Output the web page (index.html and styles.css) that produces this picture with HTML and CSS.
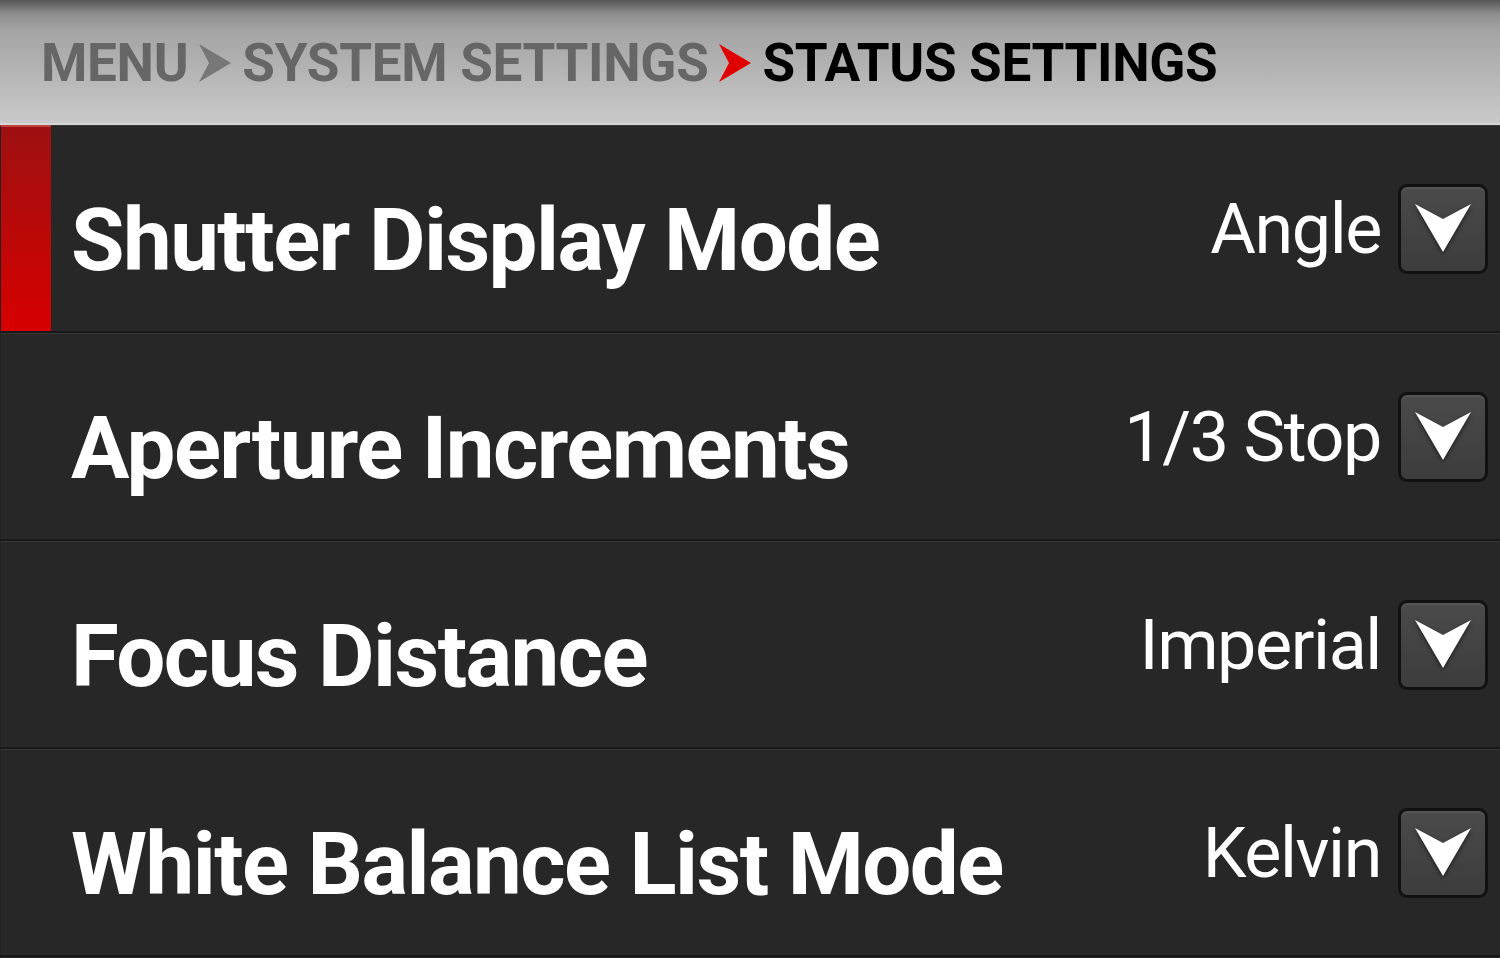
FILE: index.html
```html
<!DOCTYPE html>
<html>
<head>
<meta charset="utf-8">
<link rel="stylesheet" href="styles.css">
</head>
<body>
<header class="crumbs">
  <span class="crumb">MENU</span>
  <svg class="chev" viewBox="0 0 32 38"><path d="M0 0 L32 19 L0 38 L10 19 Z" fill="#777"/></svg>
  <span class="crumb">SYSTEM SETTINGS</span>
  <svg class="chev" viewBox="0 0 32 38"><path d="M0 0 L32 19 L0 38 L10 19 Z" fill="#e00000"/></svg>
  <span class="crumb current">STATUS SETTINGS</span>
</header>
<main class="list">
  <div class="row selected">
    <div class="marker"></div>
    <div class="label">Shutter Display Mode</div>
    <div class="value">Angle</div>
    <div class="drop"><svg viewBox="3 3 84 84"><path d="M17 20 L45 35 L73 20 L45 68 Z" fill="#fff"/></svg></div>
  </div>
  <div class="row">
    <div class="marker"></div>
    <div class="label">Aperture Increments</div>
    <div class="value">1/3 Stop</div>
    <div class="drop"><svg viewBox="3 3 84 84"><path d="M17 20 L45 35 L73 20 L45 68 Z" fill="#fff"/></svg></div>
  </div>
  <div class="row">
    <div class="marker"></div>
    <div class="label">Focus Distance</div>
    <div class="value">Imperial</div>
    <div class="drop"><svg viewBox="3 3 84 84"><path d="M17 20 L45 35 L73 20 L45 68 Z" fill="#fff"/></svg></div>
  </div>
  <div class="row">
    <div class="marker"></div>
    <div class="label">White Balance List Mode</div>
    <div class="value">Kelvin</div>
    <div class="drop"><svg viewBox="3 3 84 84"><path d="M17 20 L45 35 L73 20 L45 68 Z" fill="#fff"/></svg></div>
  </div>
</main>
</body>
</html>
```
FILE: styles.css
```css
* { box-sizing: border-box; }
html, body {
  margin: 0;
  padding: 0;
  background: #272727;
  font-family: Roboto, "Liberation Sans", sans-serif;
  overflow: hidden;
}
.crumbs {
  height: 125px;
  display: flex;
  align-items: center;
  padding-left: 41px;
  padding-top: 3px;
  gap: 11px;
  background: linear-gradient(#565656 0px, #8e8e8e 14px, #a4a4a4 30px, #b4b4b4 70px, #c9c9c9 122px);
  border-bottom: 2px solid #d6d6d6;
}
.crumb {
  font-size: 53px;
  font-weight: 700;
  color: #666;
  line-height: 1;
  letter-spacing: -0.3px;
}
.crumb.current { color: #000; }
.chev { width: 32px; height: 38px; flex: none; }
.list { display: flex; flex-direction: column; }
.row {
  height: 208px;
  display: flex;
  align-items: center;
  border-top: 1px solid #363636;
  border-bottom: 2px solid #181818;
  background: #272727;
  padding-right: 12px;
}
.marker {
  width: 51px;
  align-self: stretch;
  margin-top: -1px;
  border-left: 1px solid #222;
  flex: none;
}
.row.selected .marker {
  background: linear-gradient(#9e1010 0px, #b40a0a 40%, #d80000 100%);
  border-top: 2px solid #c04040;
}
.label {
  flex: 1;
  padding-left: 20px;
  margin-top: 22px;
  font-size: 87px;
  font-weight: 700;
  color: #fff;
  letter-spacing: -1.55px;
  white-space: nowrap;
}
.value {
  font-size: 70px;
  font-weight: 400;
  color: #fff;
  letter-spacing: -1.4px;
  margin-right: 17px;
  white-space: nowrap;
}
.drop {
  width: 90px;
  height: 90px;
  flex: none;
  border: 3px solid #111;
  border-radius: 9px;
  background: linear-gradient(#4a4a4a, #3c3c3c);
  box-shadow: inset 0 2px 0 #555;
}
.drop svg {
  display: block;
  width: 84px;
  height: 84px;
  filter: drop-shadow(0 2px 2px rgba(0,0,0,0.55));
}
```
